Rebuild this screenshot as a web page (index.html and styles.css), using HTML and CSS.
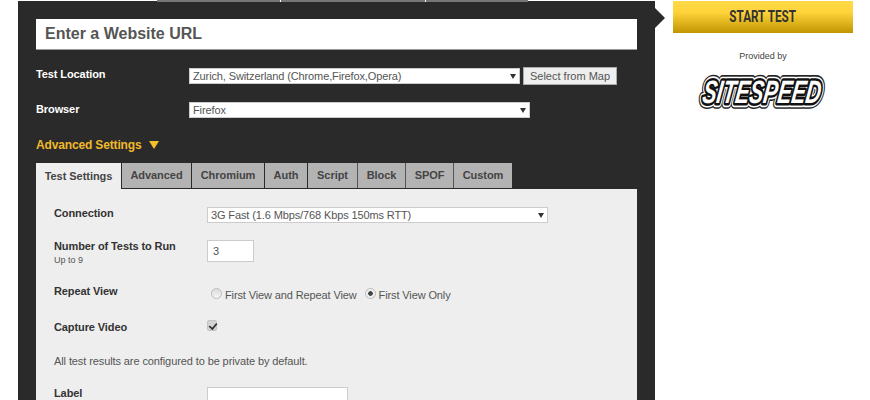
FILE: index.html
```html
<!DOCTYPE html>
<html lang="en">
<head>
<meta charset="utf-8">
<title>WebPageTest</title>
<link rel="stylesheet" href="styles.css">
</head>
<body>
<div class="page">
  <main class="panel">
    <div class="top-tabs"><span class="top-tab"></span><span class="top-tab"></span><span class="top-tab"></span></div>
    <span class="panel-arrow"></span>
    <div class="url-box">Enter a Website URL</div>
    <div class="row row-location">
      <span class="row-label">Test Location</span>
      <span class="select select-location"><select><option>Zurich, Switzerland (Chrome,Firefox,Opera)</option></select></span>
      <button class="map-btn" type="button">Select from Map</button>
    </div>
    <div class="row row-browser">
      <span class="row-label">Browser</span>
      <span class="select select-browser"><select><option>Firefox</option></select></span>
    </div>
    <div class="adv-toggle">Advanced Settings <span class="adv-tri"></span></div>
    <div class="tabs">
      <span class="tab tab-active">Test Settings</span>
      <span class="tab w-adv">Advanced</span>
      <span class="tab w-chr">Chromium</span>
      <span class="tab w-auth">Auth</span>
      <span class="tab w-script">Script</span>
      <span class="tab w-block">Block</span>
      <span class="tab w-spof">SPOF</span>
      <span class="tab w-custom">Custom</span>
    </div>
    <section class="settings">
      <div class="field f-conn">
        <span class="field-label">Connection</span>
        <span class="select select-conn"><select><option>3G Fast (1.6 Mbps/768 Kbps 150ms RTT)</option></select></span>
      </div>
      <div class="field f-num">
        <span class="field-label">Number of Tests to Run<small class="hint">Up to 9</small></span>
        <input class="text-input num-input" type="text" value="3">
      </div>
      <div class="field f-repeat">
        <span class="field-label">Repeat View</span>
        <span class="radios">
          <label class="radio-item"><input type="radio" name="rv">First View and Repeat View</label>
          <label class="radio-item"><input type="radio" name="rv" checked>First View Only</label>
        </span>
      </div>
      <div class="field f-video">
        <span class="field-label">Capture Video</span>
        <input class="check" type="checkbox" checked>
      </div>
      <p class="note">All test results are configured to be private by default.</p>
      <div class="field f-label">
        <span class="field-label">Label</span>
        <input class="text-input label-input" type="text">
      </div>
    </section>
  </main>
  <aside class="side">
    <button class="start" type="button"><span class="start-text">START TEST</span></button>
    <div class="provided">Provided by</div>
    <svg class="logo" viewBox="0 0 130 34" width="130" height="34" role="img" aria-label="SiteSpeed">
      <g transform="translate(3.5 28) skewX(-8) scale(.68 1.04)">
        <text class="logo-t logo-o1" x="0" y="0">SITESPEED</text>
        <text class="logo-t logo-o2" x="0" y="0">SITESPEED</text>
        <text class="logo-t logo-o3" x="0" y="0">SITESPEED</text>
        <text class="logo-t logo-o4" x="0" y="0">SITESPEED</text>
      </g>
    </svg>
  </aside>
</div>
</body>
</html>
```

FILE: styles.css
```css
* { box-sizing: border-box; }
html, body { margin: 0; height: 400px; overflow: hidden; background: #fff; }
body { font-family: "Liberation Sans", Arial, sans-serif; color: #333; }
.page { display: flex; align-items: flex-start; padding-left: 18px; height: 400px; overflow: hidden; }

.panel {
  position: relative;
  width: 637px;
  height: 420px;
  margin-top: 1px;
  padding: 18px 18px 0;
  background: #2a2a2a;
  flex: none;
}
.top-tabs { position: absolute; left: 139px; top: -1px; display: flex; height: 2px; background: #777; }
.top-tab { display: block; height: 2px; border-right: 1px solid #fff; width: 124px; }
.top-tab:nth-child(2) { width: 145px; }
.top-tab:nth-child(3) { width: 102px; border-right: 0; }
.panel-arrow {
  position: absolute; right: -10px; top: 7px; width: 0; height: 0;
  border-left: 10px solid #2a2a2a;
  border-top: 10px solid transparent;
  border-bottom: 10px solid transparent;
}

.url-box {
  height: 31px;
  padding-left: 9px;
  background: #fff;
  border-bottom: 1px solid #999;
  font-size: 16px;
  font-weight: 700;
  line-height: 29px;
  color: #555;
}

.row { display: flex; align-items: center; color: #fff; }
.row-label { width: 153px; flex: none; font-size: 11px; font-weight: 700; letter-spacing: -.1px; position: relative; top: -2px; }
.row-location { margin-top: 17px; height: 18px; }
.row-browser { margin-top: 16px; height: 18px; }
.row-browser .row-label { top: -1px; }

.select { position: relative; display: block; flex: none; height: 16px; }
.select select {
  appearance: none;
  display: block;
  width: 100%;
  height: 16px;
  padding: 0 0 0 4px;
  border: 0;
  border-radius: 0;
  background: #fff;
  color: #555;
  font: 11px/16px "Liberation Sans", Arial, sans-serif;
  letter-spacing: -.12px;
  box-shadow: inset 0 0 0 1px #ccc;
}
.select::after {
  content: "";
  position: absolute;
  right: 4px; top: 6px;
  border-top: 5px solid #333;
  border-left: 3px solid transparent;
  border-right: 3px solid transparent;
}
.select-location { width: 331px; }
.select-browser { width: 341px; }
.select-conn { width: 341px; }
.map-btn {
  margin-left: 3px;
  width: 94px;
  height: 18px;
  padding: 0;
  border: 1px solid #aaa;
  background: #eee;
  color: #555;
  font: 11px "Liberation Sans", Arial, sans-serif;
}

.adv-toggle {
  margin-top: 18px;
  height: 17px;
  color: #f0b92b;
  font-size: 12px;
  font-weight: 700;
  line-height: 16px;
  letter-spacing: -.15px;
}
.adv-tri {
  display: inline-block;
  margin-left: 4px;
  border-top: 8px solid #f5c02c;
  border-left: 5px solid transparent;
  border-right: 5px solid transparent;
}

.tabs { display: flex; margin-top: 9px; height: 26px; }
.tab {
  display: block;
  height: 25px;
  background: #b3b3b3;
  border-right: 1px solid #555;
  color: #444;
  font-size: 11px;
  font-weight: 700;
  letter-spacing: -.05px;
  line-height: 25px;
  text-align: center;
}
.tab-active { width: 86px; height: 26px; background: #eee; border-right: 1px solid #2a2a2a; line-height: 26px; }
.w-adv { width: 70px; border-right-color: #2a2a2a; }
.w-chr { width: 73px; border-right-color: #2a2a2a; }
.w-auth { width: 43px; border-right-color: #2a2a2a; }
.w-script { width: 50px; }
.w-block { width: 48px; }
.w-spof { width: 48px; }
.w-custom { width: 58px; border-right: 0; }

.settings { height: 230px; padding: 18px 18px 0; background: #eee; }
.field { display: flex; align-items: flex-start; color: #333; }
.field-label { display: block; width: 153px; flex: none; font-size: 11px; font-weight: 700; letter-spacing: -.1px; line-height: 13px; }
.hint { display: block; font-size: 9px; font-weight: 400; letter-spacing: 0; line-height: 14px; color: #555; }
.f-conn { height: 16px; }
.f-num { margin-top: 17px; height: 22px; }
.text-input { display: block; background: #fff; border: 1px solid #ccc; padding: 0 0 0 5px; color: #555; font: 11px "Liberation Sans", Arial, sans-serif; }
.num-input { width: 47px; height: 22px; }
.label-input { width: 141px; height: 22px; }
.f-repeat { margin-top: 23px; height: 18px; }
.radios { display: flex; margin-left: 4px; gap: 8px; padding-top: 4px; }
.radio-item { display: flex; align-items: center; font-size: 11px; letter-spacing: -.12px; color: #555; line-height: 13px; }
.radio-item input {
  appearance: none;
  width: 11px; height: 11px;
  margin: -4px 3px 0 0;
  border: 1px solid #bbb;
  border-radius: 50%;
  background: linear-gradient(#ddd, #f4f4f4);
}
.radio-item input:checked { background: radial-gradient(circle, #444 0 2px, #eee 2.6px); }
.f-video { margin-top: 18px; height: 13px; }
.check {
  appearance: none;
  position: relative;
  width: 10px; height: 11px;
  margin: -1px 0 0;
  border: 1px solid #c4c4c4;
  border-radius: 2px;
  background: #d4d4d4;
}
.check::after {
  content: "";
  position: absolute;
  left: 2px; top: 0;
  width: 4px; height: 7px;
  border-right: 2px solid #333;
  border-bottom: 2px solid #333;
  transform: rotate(40deg) scale(.85);
}
.note { margin: 21px 0 0; font-size: 11px; letter-spacing: -.1px; line-height: 13px; color: #555; }
.f-label { margin-top: 19px; }

.side { width: 180px; margin-left: 18px; flex: none; display: flex; flex-direction: column; align-items: center; }
.start {
  width: 180px;
  height: 32px;
  margin-top: 1px;
  padding: 0;
  border: 0;
  background: linear-gradient(#ffd948, #ffd43a 35%, #c09500);
  color: #333;
  font: 700 16px/32px "Roboto", "Liberation Sans", sans-serif;
}
.start-text { display: inline-block; transform: scaleX(.73); }
.provided { margin-top: 17px; font-size: 9px; line-height: 12px; color: #444; }
.logo { margin-top: 13px; display: block; overflow: visible; }
.logo-t {
  font-family: "Liberation Sans", sans-serif;
  font-size: 31px;
  font-weight: 700;
  font-style: italic;
  stroke-linejoin: round;
}
.logo-o1 { stroke: #222; stroke-width: 11px; fill: #222; }
.logo-o2 { stroke: #fff; stroke-width: 8px; fill: #fff; }
.logo-o3 { stroke: #111; stroke-width: 5px; fill: #111; }
.logo-o4 { fill: #fff; }
```
